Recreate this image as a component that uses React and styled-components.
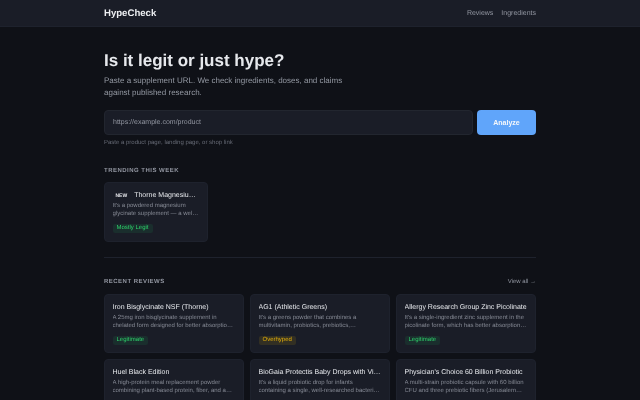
import React from 'react';
import styled, { createGlobalStyle } from 'styled-components';

const GlobalStyle = createGlobalStyle`
  * { box-sizing: border-box; }
  html, body { margin: 0; height: 100%; overflow: hidden; }
  body {
    background: #0f1117;
    color: #e2e4e9;
    font-family: "Liberation Sans", Arial, sans-serif;
    text-rendering: geometricPrecision;
  }
`;

const Page = styled.div`
  filter: blur(0.2px);
`;

const Header = styled.header`
  height: 27px;
  background: #1a1d27;
  border-bottom: 1px solid #1e222d;
  display: flex;
  justify-content: center;
`;

const HeaderInner = styled.div`
  width: 432px;
  display: flex;
  align-items: center;
  justify-content: space-between;
`;

const Logo = styled.div`
  font-size: 9.6px;
  font-weight: 700;
  color: #eceef1;
`;

const Nav = styled.nav`
  display: flex;
  gap: 8px;
`;

const NavLink = styled.a`
  font-size: 7px;
  color: #9296a1;
`;

const Main = styled.main`
  width: 432px;
  margin: 0 auto;
  padding-top: 24px;
`;

const Title = styled.h1`
  margin: 0 0 4px;
  font-size: 17px;
  line-height: 20px;
  font-weight: 700;
  color: #e6e8ec;
`;

const Sub = styled.p`
  margin: 0 0 11px;
  font-size: 8px;
  line-height: 12px;
  color: #9499a3;
  max-width: 260px;
`;

const SearchRow = styled.div`
  display: flex;
  gap: 4px;
`;

const UrlInput = styled.div`
  flex: 1;
  height: 25px;
  background: #1a1d27;
  border: 1px solid #22262f;
  border-radius: 4px;
  padding: 0 8px;
  display: flex;
  align-items: center;
  font-size: 7px;
  color: #9296a1;
`;

const AnalyzeButton = styled.button`
  width: 59px;
  height: 25px;
  border: 0;
  border-radius: 4px;
  background: #60a5fa;
  color: #f4f7fb;
  font-family: inherit;
  font-size: 7px;
  font-weight: 700;
`;

const Hint = styled.div`
  margin-top: 4px;
  font-size: 6px;
  line-height: 8px;
  color: #666a75;
`;

const SectionLabel = styled.h2`
  margin: 0;
  font-size: 6px;
  line-height: 8px;
  font-weight: 700;
  letter-spacing: 0.48px;
  text-transform: uppercase;
  color: #9296a1;
`;

const Trending = styled.section`
  margin-top: 20px;
`;

const TrendingCard = styled.div`
  width: 104px;
  margin-top: 7px;
`;

const Card = styled.article`
  background: #1a1d27;
  border: 1px solid #1e222d;
  border-radius: 4px;
  padding: 8px 7.5px;
  height: ${({ $tall }) => ($tall ? '60px' : '59px')};
  min-width: 0;
`;

const CardHead = styled.div`
  display: flex;
  align-items: center;
  gap: 4px;
`;

const NewTag = styled.span`
  flex: none;
  padding: 0 3px;
  font-size: 5px;
  font-weight: 700;
  color: #e8e9ed;
`;

const CardTitle = styled.h3`
  margin: 0;
  font-size: 7px;
  line-height: 10px;
  font-weight: 400;
  color: #e6e8ec;
  white-space: nowrap;
  overflow: hidden;
  text-overflow: ellipsis;
`;

const CardDesc = styled.p`
  margin: 1px 0 0;
  font-size: 6px;
  line-height: 8px;
  color: #868a95;
  display: -webkit-box;
  -webkit-line-clamp: 2;
  -webkit-box-orient: vertical;
  overflow: hidden;
`;

const tones = {
  good: { fg: '#2dd06a', bg: 'rgba(34, 197, 94, 0.1)' },
  warn: { fg: '#eab308', bg: 'rgba(234, 179, 8, 0.12)' },
};

const Badge = styled.span`
  display: block;
  width: fit-content;
  margin-top: 6px;
  padding: 0 4px;
  border-radius: 2px;
  font-size: 6px;
  line-height: 9px;
  color: ${({ $tone }) => tones[$tone].fg};
  background: ${({ $tone }) => tones[$tone].bg};
`;

const Divider = styled.hr`
  margin: 15px 0 20px;
  border: 0;
  border-top: 1px solid #1e222d;
`;

const RecentHead = styled.div`
  display: flex;
  align-items: center;
  justify-content: space-between;
`;

const ViewAll = styled.a`
  font-size: 6px;
  color: #9296a1;
`;

const Grid = styled.div`
  margin-top: 8px;
  display: grid;
  grid-template-columns: repeat(3, 1fr);
  gap: 6px;
`;

const reviews = [
  { name: 'Iron Bisglycinate NSF (Thorne)', desc: 'A 25mg iron bisglycinate supplement in chelated form designed for better absorption and fewer side effects than other forms', tone: 'good', verdict: 'Legitimate' },
  { name: 'AG1 (Athletic Greens)', desc: "It's a greens powder that combines a multivitamin, probiotics, prebiotics, adaptogens and a long list of other things", tone: 'warn', verdict: 'Overhyped' },
  { name: 'Allergy Research Group Zinc Picolinate', desc: "It's a single-ingredient zinc supplement in the picolinate form, which has better absorption than most other forms", tone: 'good', verdict: 'Legitimate' },
  { name: 'Huel Black Edition', desc: 'A high-protein meal replacement powder combining plant-based protein, fiber, and a long list of added vitamins', tone: 'good', verdict: 'Legitimate' },
  { name: 'BioGaia Protectis Baby Drops with Vitamin D', desc: "It's a liquid probiotic drop for infants containing a single, well-researched bacterial strain with added vitamin", tone: 'good', verdict: 'Legitimate' },
  { name: "Physician's Choice 60 Billion Probiotic", desc: 'A multi-strain probiotic capsule with 60 billion CFU and three prebiotic fibers (Jerusalem artichoke and others)', tone: 'warn', verdict: 'Overhyped' },
];

export default function App() {
  return (
    <Page>
      <GlobalStyle />
      <Header>
        <HeaderInner>
          <Logo>HypeCheck</Logo>
          <Nav>
            <NavLink>Reviews</NavLink>
            <NavLink>Ingredients</NavLink>
          </Nav>
        </HeaderInner>
      </Header>
      <Main>
        <Title>Is it legit or just hype?</Title>
        <Sub>Paste a supplement URL. We check ingredients, doses, and claims against published research.</Sub>
        <SearchRow>
          <UrlInput>https://example.com/product</UrlInput>
          <AnalyzeButton>Analyze</AnalyzeButton>
        </SearchRow>
        <Hint>Paste a product page, landing page, or shop link</Hint>
        <Trending>
          <SectionLabel>Trending this week</SectionLabel>
          <TrendingCard>
            <Card $tall>
              <CardHead>
                <NewTag>NEW</NewTag>
                <CardTitle>Thorne Magnesium Bisglycinate</CardTitle>
              </CardHead>
              <CardDesc>It's a powdered magnesium glycinate supplement — a well-tolerated form with decent evidence for sleep</CardDesc>
              <Badge $tone="good">Mostly Legit</Badge>
            </Card>
          </TrendingCard>
        </Trending>
        <Divider />
        <RecentHead>
          <SectionLabel>Recent reviews</SectionLabel>
          <ViewAll>View all →</ViewAll>
        </RecentHead>
        <Grid>
          {reviews.map((r) => (
            <Card key={r.name}>
              <CardTitle>{r.name}</CardTitle>
              <CardDesc>{r.desc}</CardDesc>
              <Badge $tone={r.tone}>{r.verdict}</Badge>
            </Card>
          ))}
        </Grid>
      </Main>
    </Page>
  );
}
